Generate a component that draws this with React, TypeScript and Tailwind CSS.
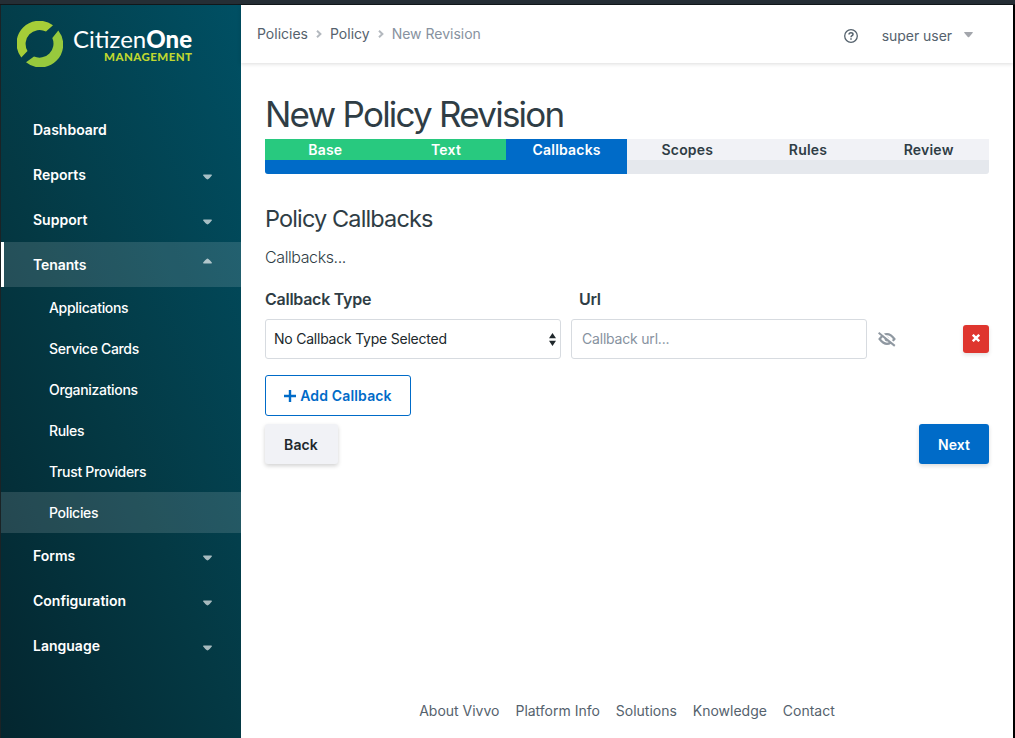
import React from "react";

const Caret = ({ up = false }: { up?: boolean }) => (
  <svg width="9" height="6" viewBox="0 0 9 6" className={up ? "mb-[7px] rotate-180" : "mt-[5px]"}>
    <path d="M.8 .5h7.4q.8 0 .8.8Q7 3.9 5.4 5.1q-.9.8-1.8 0Q2 3.9 0 1.3 0 .5.8.5Z" fill="#fff" fillOpacity=".65" />
  </svg>
);

const Item = ({ label, open = false, leaf = false }: { label: string; open?: boolean; leaf?: boolean }) => (
  <li className={`flex h-[45px] items-center justify-between pr-[29px] font-semibold ${open ? "border-l-[3px] border-white bg-white/[.13] pl-[29px] tracking-[-.1px]" : "pl-8"}`}>
    <span>{label}</span>
    {!leaf && <Caret up={open} />}
  </li>
);

const SubItem = ({ label, active = false }: { label: string; active?: boolean }) => (
  <li className={`flex h-[41px] items-center pl-12 font-medium tracking-[-.32px] ${active ? "bg-white/[.13]" : ""}`}>
    <span>{label}</span>
  </li>
);

const Chevron = () => (
  <svg width="6" height="8" viewBox="0 0 6 8" fill="none" stroke="#b4b9bf" strokeWidth="2" className="mx-2">
    <path d="m1 .8 3.4 3.2L1 7.2" />
  </svg>
);

const Logo = () => (
  <div className="flex h-[70px] pt-4 pl-4">
    <svg width="46" height="46" viewBox="0 0 46 46" className="shrink-0">
      <path d="M36 4.3A22.8 22.8 0 0 0 4.3 36.5L10.5 30A14 14 0 0 1 29 10.5Z" fill="#a5cd38" />
      <path d="M41.3 9.5A22.8 22.8 0 0 1 9 41.3L17 35.5A14 14 0 0 0 35.3 17Z" fill="#97c93d" />
    </svg>
    <svg width="130" height="46" viewBox="0 0 130 46" className="ml-2.5 overflow-visible">
      <text x="0" y="27" textLength="119" fontFamily="Lato" fontSize="24" fill="#fff">Citizen<tspan fontWeight="900">One</tspan></text>
      <text x="31" y="40" textLength="88" fontFamily="Lato" fontWeight="900" fontSize="11.5" fill="#bfd730">MANAGEMENT</text>
    </svg>
  </div>
);

export default function App() {
  return (
    <div className="flex h-[738px] w-[1015px] flex-col overflow-hidden bg-white font-['Inter',sans-serif] text-sm text-[#2f3d45]">
      <div className="h-[5px] shrink-0 border-b border-[#11171a] bg-[#252e35]" />
      <div className="flex min-h-0 flex-1">
        <aside className="w-[241px] shrink-0 border-l border-[#1b2326] bg-[linear-gradient(68deg,#04262f_0%,#043944_45%,#005064_100%)] text-white">
          <Logo />
          <ul className="mt-8 leading-5">
            <Item label="Dashboard" leaf />
            <Item label="Reports" />
            <Item label="Support" />
            <Item label="Tenants" open />
          </ul>
          <ul className="leading-5">
            <SubItem label="Applications" />
            <SubItem label="Service Cards" />
            <SubItem label="Organizations" />
            <SubItem label="Rules" />
            <SubItem label="Trust Providers" />
            <SubItem label="Policies" active />
          </ul>
          <ul className="leading-5">
            <Item label="Forms" />
            <Item label="Configuration" />
            <Item label="Language" />
          </ul>
        </aside>
        <div className="flex w-[772px] shrink-0 flex-col">
          <header className="flex h-[58px] shrink-0 items-center justify-between pr-10 pl-4 text-[#55626d] shadow-[0_1px_4px_rgba(0,0,0,.14)]">
            <nav className="flex items-center">
              <span>Policies</span><Chevron /><span>Policy</span><Chevron /><span className="text-[#8792a0]">New Revision</span>
            </nav>
            <div className="flex items-center pt-1">
              <svg width="14" height="14" viewBox="0 0 14 14" fill="none" stroke="#55626d" className="mr-6">
                <circle cx="7" cy="7" r="6.3" strokeWidth="1.3" />
                <path d="M5 5.6C5 3.2 9 3.3 9 5.5 9 6.8 7 6.7 7 8.2M7 9.3v1.5" strokeWidth="1.5" />
              </svg>
              <span className="tracking-[-.05px]">super user</span>
              <svg width="9" height="6" viewBox="0 0 9 6" className="mb-0.5 ml-3"><path d="M.8 0h7.4q.8 0 .6.8L5.2 5q-.7.7-1.4 0L.2.8Q0 0 .8 0Z" fill="#a3a6ac" /></svg>
            </div>
          </header>
          <main className="flex flex-1 flex-col px-6 pt-7">
            <h1 className="mb-0.5 text-[35px] leading-[46px] tracking-[-1.77px]">New Policy Revision</h1>
            <div className="h-[35px] shrink-0 overflow-hidden rounded-b-[3px] bg-[#e5e8ed]">
              <div className="grid h-[21px] grid-cols-6 text-center leading-[21px] font-semibold tracking-[.2px]">
                <div className="bg-[#28c97f] text-white">Base</div>
                <div className="bg-[#28c97f] text-white">Text</div>
                <div className="bg-[#006bc8] text-white">Callbacks</div>
                <div className="bg-[#f1f2f6]">Scopes</div>
                <div className="bg-[#f1f2f6]">Rules</div>
                <div className="bg-[#f1f2f6]">Review</div>
              </div>
              <div className="h-[14px] w-1/2 bg-[#006bc8]" />
            </div>
            <h2 className="mt-[29px] text-[23.5px] leading-8 tracking-[-.87px]">Policy Callbacks</h2>
            <p className="mt-2.5 text-base leading-6 font-light tracking-[-.4px]">Callbacks...</p>
            <div className="mt-[18px] flex text-base leading-6 font-semibold tracking-[-.26px]">
              <span className="w-[314px]">Callback Type</span><span>Url</span>
            </div>
            <div className="mt-2 flex h-10 items-center">
              <div className="mr-2.5 flex h-10 w-[296px] items-center justify-between rounded-[3px] border border-[#d7dbe0] pr-1 pl-2 tracking-[-.23px] text-[#20282c]">
                <span>No Callback Type Selected</span>
                <svg width="7" height="13" viewBox="0 0 7 13" fill="#20282c"><path d="M3.5 0 7 5.2H0ZM3.5 13 0 7.8h7Z" /></svg>
              </div>
              <div className="flex h-10 w-[296px] items-center rounded-[3px] border border-[#d7dbe0] pl-2.5 tracking-[-.2px] text-[#8792a0]"><span>Callback url...</span></div>
              <svg width="18" height="16" viewBox="0 0 18 16" className="ml-[11px]" fill="none" stroke="#8f98a1">
                <path d="M1.6 8q7.4-9.6 14.8 0-7.4 9.6-14.8 0Z" strokeWidth="2.2" /><circle cx="9" cy="8" r="2" fill="#8f98a1" strokeWidth="1" />
                <path d="M1.6 .4 17.8 13.6" stroke="#fff" strokeWidth="2" /><path d="M.6 1.7 16.8 14.9" strokeWidth="2" />
              </svg>
              <button className="ml-auto flex h-7 w-[26px] items-center justify-center rounded-[3px] bg-[#df352e] shadow-[0_2px_4px_rgba(0,0,0,.12)]">
                <svg width="8" height="8" viewBox="0 0 8 8" stroke="#fff" strokeWidth="2.4" className="mb-0.5"><path d="m.8.8 6.4 6.4M7.2.8.8 7.2" /></svg>
              </button>
            </div>
            <button className="mt-4 flex h-[41px] w-[146px] items-center justify-center rounded-[3px] border border-[#006bc8] font-semibold tracking-[.15px] text-[#006bc8]">
              <svg width="12" height="12" viewBox="0 0 12 12" stroke="currentColor" strokeWidth="2.4" className="mr-1"><path d="M6 0v12M0 6h12" /></svg>
              <span>Add Callback</span>
            </button>
            <div className="mt-2 flex justify-between font-semibold tracking-[.1px]">
              <button className="h-10 w-[73px] rounded-[3px] bg-[#f1f2f6] pt-0.5 pr-px text-[#20282c] shadow-[0_2px_4px_rgba(0,0,0,.18)]">Back</button>
              <button className="h-10 w-[70px] rounded-[3px] bg-[#006bc8] pt-0.5 text-white shadow-[0_2px_4px_rgba(0,0,0,.14)]">Next</button>
            </div>
            <footer className="mt-auto mb-[17px] flex justify-center gap-4 leading-5 tracking-[-.01px] text-[#55626d]">
              <span>About Vivvo</span><span>Platform Info</span><span>Solutions</span><span>Knowledge</span><span>Contact</span>
            </footer>
          </main>
        </div>
        <div className="w-0.5 shrink-0 bg-black" />
      </div>
    </div>
  );
}
